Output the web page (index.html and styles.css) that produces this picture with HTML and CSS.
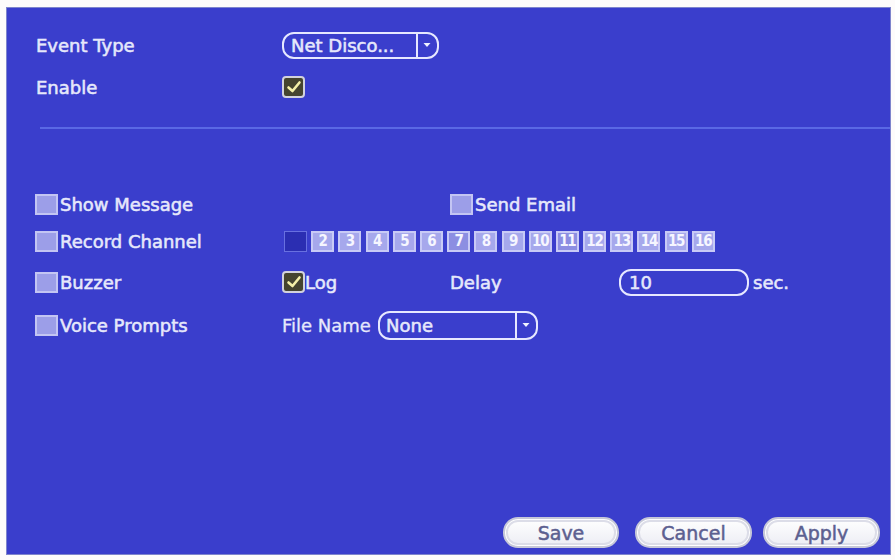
FILE: index.html
```html
<!DOCTYPE html>
<html>
<head>
<meta charset="utf-8">
<link rel="stylesheet" href="styles.css">
</head>
<body>
<div class="panel">
  <div class="row row-type">
    <span class="label">Event Type</span>
    <div class="select select-type">
      <span class="select-text">Net Disco...</span>
      <span class="select-arrow"><svg width="8" height="6" viewBox="0 0 8 6"><path d="M0.5 1 L7.5 1 L4 5 Z" fill="#f0f2ff"/></svg></span>
    </div>
  </div>
  <div class="row row-enable">
    <span class="label">Enable</span>
    <span class="check checked"><svg width="16" height="14" viewBox="0 0 16 14"><path d="M2.5 7.5 L6.5 11 L13.5 2.5" fill="none" stroke="#f4f0a8" stroke-width="2.6" stroke-linecap="round" stroke-linejoin="round"/></svg></span>
  </div>
  <div class="separator"></div>

  <div class="options">
    <div class="opt-row r1">
      <label class="cell c-wide"><span class="check"></span><span class="txt">Show Message</span></label>
      <label class="cell"><span class="check"></span><span class="txt">Send Email</span></label>
    </div>
    <div class="opt-row r2">
      <label class="cell c1"><span class="check"></span><span class="txt">Record Channel</span></label>
      <div class="channels">
        <span class="ch off"></span>
        <span class="ch">2</span><span class="ch">3</span><span class="ch">4</span><span class="ch">5</span><span class="ch">6</span><span class="ch dim">7</span><span class="ch">8</span><span class="ch">9</span><span class="ch">10</span><span class="ch dim">11</span><span class="ch">12</span><span class="ch">13</span><span class="ch">14</span><span class="ch">15</span><span class="ch">16</span>
      </div>
    </div>
    <div class="opt-row r3">
      <label class="cell c1"><span class="check"></span><span class="txt">Buzzer</span></label>
      <label class="cell c2"><span class="check checked"><svg width="16" height="14" viewBox="0 0 16 14"><path d="M2.5 7.5 L6.5 11 L13.5 2.5" fill="none" stroke="#f4f0a8" stroke-width="2.6" stroke-linecap="round" stroke-linejoin="round"/></svg></span><span class="txt">Log</span></label>
      <span class="cell c3">Delay</span>
      <div class="cell">
        <div class="input"><span>10</span></div>
        <span class="unit">sec.</span>
      </div>
    </div>
    <div class="opt-row r4">
      <label class="cell c1"><span class="check"></span><span class="txt">Voice Prompts</span></label>
      <div class="cell">
        <span class="fname">File Name</span>
        <div class="select select-file">
          <span class="select-text">None</span>
          <span class="select-arrow"><svg width="8" height="6" viewBox="0 0 8 6"><path d="M0.5 1 L7.5 1 L4 5 Z" fill="#f0f2ff"/></svg></span>
        </div>
      </div>
    </div>
  </div>

  <div class="buttons">
    <button class="btn btn-save">Save</button>
    <button class="btn btn-cancel">Cancel</button>
    <button class="btn btn-apply">Apply</button>
  </div>
</div>
</body>
</html>
```

FILE: styles.css
```css
html, body {
  margin: 0;
  padding: 0;
  background: #fdfbfb;
}

body {
  width: 895px;
  height: 560px;
  overflow: hidden;
  font-family: "DejaVu Sans", "Liberation Sans", sans-serif;
  font-size: 18px;
  color: #e6e8fb;
  -webkit-text-stroke: 0.55px #e6e8fb;
}

.panel {
  box-sizing: border-box;
  margin: 7px 0 0 6px;
  width: 885px;
  height: 548px;
  background: #3a3ecc;
  border: 1px solid #7e84cc;
  padding: 24px 10px 6px 28px;
  display: flex;
  flex-direction: column;
}

.row {
  display: flex;
  align-items: center;
}

.label {
  width: 246px;
  padding-left: 1px;
}

.row-type {
  height: 26px;
}

.row-enable {
  margin-top: 18px;
  height: 22px;
}

.separator {
  margin: 29px -10px 0 5px;
  height: 2px;
  background: #5a68e4;
}

.select {
  box-sizing: border-box;
  display: flex;
  align-items: stretch;
  border: 2px solid #e6e8ff;
  border-radius: 12px;
  height: 27px;
}

.select-type {
  width: 157px;
}

.select-text {
  flex: 1;
  padding-left: 7px;
  line-height: 23px;
}

.select-arrow {
  width: 17px;
  border-left: 2px solid #e6e8ff;
  display: flex;
  align-items: center;
  justify-content: center;
  padding-right: 2px;
}

.check {
  box-sizing: border-box;
  flex: none;
  width: 23px;
  height: 21px;
  background: #9c9ee8;
  border: 2px solid #c3c5f3;
  display: inline-flex;
  align-items: center;
  justify-content: center;
}

.check.checked {
  background: #45442f;
  border: 2px solid #d2d2dc;
  border-radius: 4px;
  height: 22px;
}

.options {
  margin-top: 61px;
  display: flex;
  flex-direction: column;
}

.opt-row {
  display: flex;
  align-items: center;
  height: 28px;
}

.r2 { margin-top: 9px; }
.r3 { margin-top: 13px; }
.r4 { margin-top: 15px; }

.cell {
  display: flex;
  align-items: center;
}

.c-wide { width: 415px; }
.c1 { width: 247px; }
.c2 { width: 168px; }
.c3 { width: 169px; }

.txt {
  margin-left: 2px;
}

.c2 .txt {
  margin-left: 0;
}

.channels {
  display: flex;
  gap: 4.2px;
  margin-left: 2px;
}

.ch {
  box-sizing: border-box;
  width: 23px;
  height: 21px;
  background: #a6a8ec;
  border: 2px solid #c8caf6;
  color: #f6f6ff;
  -webkit-text-stroke: 0;
  font-family: "DejaVu Sans Condensed", "DejaVu Sans", sans-serif;
  font-weight: bold;
  font-size: 15px;
  letter-spacing: -1.2px;
  line-height: 17px;
  text-align: center;
}

.ch.off {
  background: #2b2eb2;
  border: 1px solid #6870e0;
}

.ch.dim {
  background: #8c8ee2;
}

.input {
  box-sizing: border-box;
  width: 130px;
  height: 27px;
  border: 2px solid #e6e8ff;
  border-radius: 12px;
  padding-left: 8px;
  line-height: 23px;
}

.unit {
  margin-left: 4px;
}

.fname {
  width: 96px;
  -webkit-text-stroke: 0.3px #e6e8fb;
}

.select-file {
  width: 160px;
  height: 29px;
}

.select-file .select-text {
  line-height: 25px;
  padding-left: 6px;
}

.buttons {
  margin-top: auto;
  display: flex;
  justify-content: flex-end;
}

.btn {
  box-sizing: border-box;
  height: 31px;
  width: 117px;
  border: 2px solid #c6c8d8;
  border-radius: 15px;
  background: linear-gradient(#ffffff, #ecedf4);
  box-shadow: inset 0 0 0 1px #ffffff, inset 0 0 0 3px #dcdde8;
  font-family: "DejaVu Sans", "Liberation Sans", sans-serif;
  font-size: 19px;
  color: #5c6090;
  -webkit-text-stroke: 0.5px #5c6090;
  padding: 0;
}

.btn-save {
  width: 116px;
}

.btn-cancel {
  margin-left: 16px;
}

.btn-apply {
  margin-left: 11px;
}
```
